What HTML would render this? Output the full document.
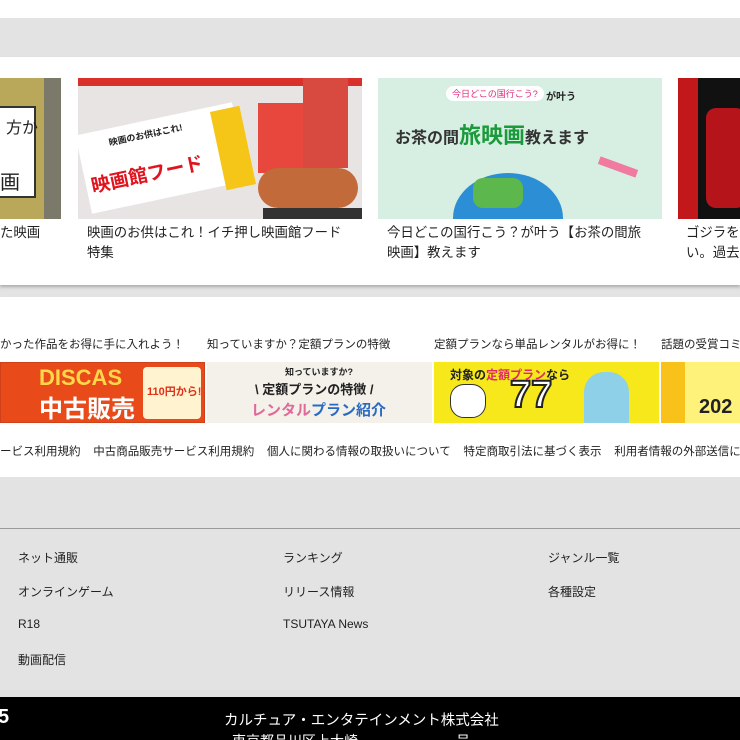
<!DOCTYPE html>
<html><head><meta charset="utf-8"><style>
*{margin:0;padding:0;box-sizing:border-box}
html,body{width:740px;height:740px;overflow:hidden}
body{background:#e3e3e3;font-family:"Liberation Sans","Noto Sans CJK JP",sans-serif;color:#222;position:relative}
.a{position:absolute}
.t{font-size:13.4px;line-height:20px;color:#222;white-space:nowrap}
.s{font-size:11.5px;color:#222;white-space:nowrap}
.f{font-size:12px;color:#222;white-space:nowrap}
</style></head><body>
<div class="a" style="left:0;top:0;width:740px;height:18px;background:#fff"></div>
<div class="a" style="left:0;top:57px;width:740px;height:228px;background:#fff;box-shadow:0 2px 3px rgba(0,0,0,.25)"></div>
<div class="a" style="left:0;top:78px;width:61px;height:141px;background:#b9a85a;overflow:hidden">
 <div class="a" style="left:0;top:28px;width:36px;height:92px;background:#fff;border:2px solid #333;border-left:none"></div>
 <div class="a" style="left:6px;top:36px;font-size:16px">方か</div>
 <div class="a" style="left:0;top:88px;font-size:20px">画</div>
 <div class="a" style="left:44px;top:0;width:17px;height:141px;background:#7b7a6a"></div>
</div>
<div class="a" style="left:78px;top:78px;width:284px;height:141px;background:#e8e4e4;overflow:hidden">
 <div class="a" style="left:0;top:0;width:284px;height:8px;background:#d9302c"></div>
 <div class="a" style="left:4px;top:40px;width:160px;height:80px;background:#fff;transform:rotate(-12deg)"></div>
 <div class="a" style="left:12px;top:82px;font-size:19px;font-weight:bold;color:#e0141e;transform:rotate(-12deg)">映画館フード</div>
 <div class="a" style="left:30px;top:50px;font-size:9px;font-weight:bold;transform:rotate(-12deg)">映画のお供はこれ!</div>
 <div class="a" style="left:140px;top:30px;width:30px;height:80px;background:#f5c518;transform:rotate(-12deg)"></div>
 <div class="a" style="left:180px;top:25px;width:45px;height:70px;background:#e8473e"></div>
 <div class="a" style="left:225px;top:0;width:45px;height:90px;background:#d84a3f"></div>
 <div class="a" style="left:180px;top:90px;width:100px;height:40px;background:#c36a3a;border-radius:20px"></div>
 <div class="a" style="left:185px;top:130px;width:100px;height:11px;background:#333"></div>
</div>
<div class="a" style="left:378px;top:78px;width:284px;height:141px;background:#d7eee3;overflow:hidden">
 <div class="a" style="left:68px;top:8px;font-size:9px;color:#e0287a;background:#fff;border-radius:10px;padding:1px 6px">今日どこの国行こう?</div>
 <div class="a" style="left:168px;top:10px;font-size:10px;font-weight:bold">が叶う</div>
 <div class="a" style="left:17px;top:40px;font-size:16px;font-weight:bold;color:#333">お茶の間<span style="color:#1a9a3a;font-size:22px">旅映画</span>教えます</div>
 <div class="a" style="left:75px;top:95px;width:110px;height:90px;border-radius:50%;background:#2c8fd6"></div>
 <div class="a" style="left:95px;top:100px;width:50px;height:30px;background:#5cb84c;border-radius:10px"></div>
 <div class="a" style="left:220px;top:85px;width:40px;height:8px;background:#f07aa0;transform:rotate(20deg)"></div>
</div>
<div class="a" style="left:678px;top:78px;width:62px;height:141px;background:#111;overflow:hidden">
 <div class="a" style="left:0;top:0;width:20px;height:141px;background:#c2171b"></div>
 <div class="a" style="left:28px;top:30px;width:40px;height:100px;background:#b5141a;border-radius:10px"></div>
</div>
<div class="a t" style="left:0;top:223px">た映画</div>
<div class="a t" style="left:87px;top:223px">映画のお供はこれ！イチ押し映画館フード<br>特集</div>
<div class="a t" style="left:387px;top:223px">今日どこの国行こう？が叶う【お茶の間旅<br>映画】教えます</div>
<div class="a t" style="left:686px;top:223px">ゴジラを<br>い。過去</div>
<div class="a" style="left:0;top:297px;width:740px;height:180px;background:#fff"></div>
<div class="a s" style="left:0;top:336px">かった作品をお得に手に入れよう！</div>
<div class="a s" style="left:207px;top:336px">知っていますか？定額プランの特徴</div>
<div class="a s" style="left:434px;top:336px">定額プランなら単品レンタルがお得に！</div>
<div class="a s" style="left:661px;top:336px">話題の受賞コミ</div>
<div class="a" style="left:0;top:362px;width:205px;height:61px;background:#e84a1a;border:1px solid #d0401a;overflow:hidden">
 <div class="a" style="left:38px;top:2px;font-size:22px;font-weight:bold;color:#ffd84a">DISCAS</div>
 <div class="a" style="left:38px;top:26px;font-size:24px;font-weight:bold;color:#fff">中古販売</div>
 <div class="a" style="left:142px;top:4px;width:58px;height:52px;background:#fff3d0;border-radius:4px"></div>
 <div class="a" style="left:146px;top:20px;font-size:11px;font-weight:bold;color:#e0301a">110円から!</div>
</div>
<div class="a" style="left:207px;top:362px;width:225px;height:61px;background:#f4f1ea;overflow:hidden">
 <div class="a" style="left:78px;top:3px;font-size:9px;font-weight:bold">知っていますか?</div>
 <div class="a" style="left:48px;top:17px;font-size:13px;font-weight:bold">\ 定額プランの特徴 /</div>
 <div class="a" style="left:44px;top:37px;font-size:15px;font-weight:bold;color:#e06a9a">レンタル<span style="color:#2a6ac0">プラン紹介</span></div>
</div>
<div class="a" style="left:434px;top:362px;width:225px;height:61px;background:#f6e81a;overflow:hidden">
 <div class="a" style="left:16px;top:4px;font-size:12px;font-weight:bold">対象の<span style="color:#e02a6a">定額プラン</span>なら</div>
 <div class="a" style="left:16px;top:22px;width:36px;height:34px;background:#fff;border:1px solid #333;border-radius:14px"></div>
 <div class="a" style="left:76px;top:12px;font-size:38px;font-weight:bold;color:#fff;-webkit-text-stroke:2px #222">77</div>
 <div class="a" style="left:150px;top:10px;width:45px;height:51px;background:#8ed0e8;border-radius:20px 20px 0 0"></div>
</div>
<div class="a" style="left:661px;top:362px;width:79px;height:61px;background:#f8c21a;overflow:hidden">
 <div class="a" style="left:24px;top:0;width:55px;height:61px;background:#fff27a"></div>
 <div class="a" style="left:38px;top:34px;font-size:20px;font-weight:bold">202</div>
</div>
<div class="a s" style="left:0;top:443px">ービス利用規約 &nbsp;&nbsp;&nbsp;中古商品販売サービス利用規約 &nbsp;&nbsp;&nbsp;個人に関わる情報の取扱いについて &nbsp;&nbsp;&nbsp;特定商取引法に基づく表示 &nbsp;&nbsp;&nbsp;利用者情報の外部送信に</div>
<div class="a" style="left:0;top:528px;width:740px;height:1px;background:#9a9a9a"></div>
<div class="a f" style="left:18px;top:549px">ネット通販</div>
<div class="a f" style="left:18px;top:583px">オンラインゲーム</div>
<div class="a f" style="left:18px;top:617px">R18</div>
<div class="a f" style="left:18px;top:651px">動画配信</div>
<div class="a f" style="left:283px;top:549px">ランキング</div>
<div class="a f" style="left:283px;top:583px">リリース情報</div>
<div class="a f" style="left:283px;top:617px">TSUTAYA News</div>
<div class="a f" style="left:548px;top:549px">ジャンル一覧</div>
<div class="a f" style="left:548px;top:583px">各種設定</div>
<div class="a" style="left:0;top:697px;width:740px;height:43px;background:#000"></div>
<div class="a" style="left:-2px;top:706px;font-size:20px;font-weight:bold;color:#fff">5</div>
<div class="a" style="left:224px;top:709px;font-size:14.5px;color:#fff;white-space:nowrap">カルチュア・エンタテインメント株式会社</div>
<div class="a" style="left:232px;top:731px;font-size:14px;color:#fff;white-space:nowrap">東京都品川区上大崎　　　　　　　号</div>
</body></html>
